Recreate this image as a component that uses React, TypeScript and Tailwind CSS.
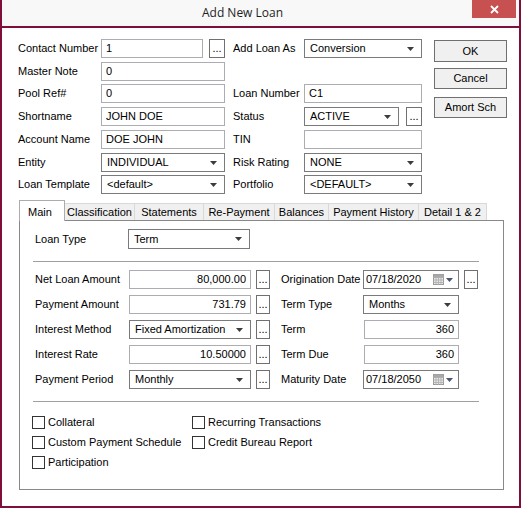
import React from 'react';

type BoxProps = { value?: string; className?: string; right?: boolean };

function Caret({ color = '#3c3c3c' }: { color?: string }) {
  return (
    <svg width="7" height="4" viewBox="0 0 7 4" className="shrink-0">
      <path d="M0 0h7L3.5 4z" fill={color} />
    </svg>
  );
}

function TextBox({ value = '', className = '', right }: BoxProps) {
  return (
    <div
      className={`h-[19px] border border-[#abadb3] bg-white flex items-center px-[4px] ${right ? 'justify-end' : ''} ${className}`}
    >
      <span className="leading-none">{value}</span>
    </div>
  );
}

function Select({ value = '', className = '' }: BoxProps) {
  return (
    <div className={`h-[19px] border border-[#7a7a7a] bg-white flex items-center pl-[5px] pr-[7px] ${className}`}>
      <span className="flex-1 leading-none">{value}</span>
      <Caret />
    </div>
  );
}

function Dots({ className = '' }: { className?: string }) {
  return (
    <div
      className={`h-[19px] border border-[#707070] bg-white flex items-end justify-center pb-[3px] text-[11px] leading-none ${className}`}
    >
      ...
    </div>
  );
}

function CalIcon() {
  return (
    <svg width="11" height="11" viewBox="0 0 11 11" className="shrink-0 mr-[2px]">
      <rect x="0.5" y="0.5" width="10" height="10" fill="#e8e8e8" stroke="#9a9a9a" />
      <path d="M0.5 3.5h10M0.5 6h10M0.5 8.5h10M3 3.5v7M5.5 3.5v7M8 3.5v7" stroke="#b4b4b4" strokeWidth="1" />
      <rect x="0.5" y="0.5" width="10" height="3" fill="#a8a8a8" />
    </svg>
  );
}

function DateBox({ value }: { value: string }) {
  return (
    <div className="h-[19px] w-[96px] border border-[#7a7a7a] bg-white flex items-center pl-[2px] pr-[5px]">
      <span className="flex-1 leading-none">{value}</span>
      <CalIcon />
      <Caret color="#4b5670" />
    </div>
  );
}

function Label({ children, className = '' }: { children?: React.ReactNode; className?: string }) {
  return <div className={`h-[19px] flex items-center leading-none ${className}`}>{children}</div>;
}

function Check({ label }: { label: string }) {
  return (
    <div className="h-[20px] flex items-center">
      <div className="w-[13px] h-[13px] border border-[#333333] bg-white shrink-0" />
      <span className="ml-[3px] leading-none">{label}</span>
    </div>
  );
}

const tabs = [
  { name: 'Classification', w: 'w-[70px]' },
  { name: 'Statements', w: 'w-[69px]' },
  { name: 'Re-Payment', w: 'w-[71px]' },
  { name: 'Balances', w: 'w-[54px]' },
  { name: 'Payment History', w: 'w-[90px]' },
  { name: 'Detail 1 & 2', w: 'w-[68px]' },
];

export default function App() {
  return (
    <div className="w-[521px] h-[508px] bg-white border-2 border-t-0 border-[#7d0f3a] text-[11px] text-black font-['Liberation_Sans',Arial,sans-serif] overflow-hidden">
      {/* Title bar */}
      <div className="relative h-[28px] bg-[#f8f8f8] border-b-2 border-[#7d0f3a] flex items-center justify-center pr-[36px]">
        <span className="text-[12px] text-[#1e1e1e] font-['Open_Sans','Noto_Sans',sans-serif] leading-none">Add New Loan</span>
        <div className="absolute right-[3px] top-0 w-[44px] h-[18px] bg-[#c75050] flex items-center justify-center">
          <svg width="9" height="9" viewBox="0 0 9 9">
            <path d="M1 1l7 7M8 1l-7 7" stroke="#ffffff" strokeWidth="1.8" />
          </svg>
        </div>
      </div>

      {/* Header fields */}
      <div className="flex pl-[16px] pt-[11px]">
        <div className="grid grid-cols-[83px_124px_8px_71px_118px] grid-rows-[23px_22px_23px_23px_23px_22px_19px]">
          <Label>Contact Number</Label>
          <div className="flex">
            <TextBox value="1" className="w-[102px]" />
            <Dots className="w-[16px] ml-[6px]" />
          </div>
          <div />
          <Label>Add Loan As</Label>
          <Select value="Conversion" />

          <Label>Master Note</Label>
          <TextBox value="0" />
          <div />
          <div />
          <div />

          <Label>Pool Ref#</Label>
          <TextBox value="0" />
          <div />
          <Label>Loan Number</Label>
          <TextBox value="C1" />

          <Label>Shortname</Label>
          <TextBox value="JOHN DOE" />
          <div />
          <Label>Status</Label>
          <div className="flex">
            <Select value="ACTIVE" className="w-[95px]" />
            <Dots className="w-[16px] ml-[7px]" />
          </div>

          <Label>Account Name</Label>
          <TextBox value="DOE JOHN" />
          <div />
          <Label>TIN</Label>
          <TextBox value="" />

          <Label>Entity</Label>
          <Select value="INDIVIDUAL" />
          <div />
          <Label>Risk Rating</Label>
          <Select value="NONE" />

          <Label>Loan Template</Label>
          <Select value="<default>" />
          <div />
          <Label>Portfolio</Label>
          <Select value="<DEFAULT>" />
        </div>

        <div className="ml-[12px] w-[73px] flex flex-col pt-[1px]">
          <div className="h-[22px] border border-[#707070] bg-[#f0f0f0] flex items-center justify-center">OK</div>
          <div className="h-[21px] mt-[6px] border border-[#707070] bg-[#f0f0f0] flex items-center justify-center">Cancel</div>
          <div className="h-[21px] mt-[8px] border border-[#707070] bg-[#f0f0f0] flex items-center justify-center">Amort Sch</div>
        </div>
      </div>

      {/* Tabs */}
      <div className="pl-[17px] mt-[6px]">
        <div className="flex items-start h-[20px]">
          <div className="relative z-10 w-[46px] h-[21px] bg-white border border-b-0 border-[#acacac] flex items-start pt-[3px] pl-[8px]">
            Main
          </div>
          {tabs.map((t) => (
            <div
              key={t.name}
              className={`${t.w} h-[17px] mt-[3px] bg-[#f0f0f0] border border-l-0 border-b-0 border-[#d9d9d9] flex items-center justify-center`}
            >
              {t.name}
            </div>
          ))}
        </div>

        {/* Panel */}
        <div className="w-[485px] h-[270px] border border-[#898989] bg-white">
          <div className="flex items-center pl-[15px] pt-[8px]">
            <div className="w-[93px]">Loan Type</div>
            <Select value="Term" className="w-[122px] h-[20px]" />
          </div>

          <div className="ml-[13px] w-[446px] mt-[12px] border-t border-[#a0a0a0]" />

          <div className="flex pl-[15px] mt-[8px]">
            <div className="flex flex-col gap-[6px]">
              <div className="flex">
                <Label className="w-[94px]">Net Loan Amount</Label>
                <TextBox value="80,000.00" right className="w-[122px]" />
                <Dots className="w-[14px] ml-[5px]" />
              </div>
              <div className="flex">
                <Label className="w-[94px]">Payment Amount</Label>
                <TextBox value="731.79" right className="w-[122px]" />
                <Dots className="w-[14px] ml-[5px]" />
              </div>
              <div className="flex">
                <Label className="w-[94px]">Interest Method</Label>
                <Select value="Fixed Amortization" className="w-[122px]" />
                <Dots className="w-[14px] ml-[5px]" />
              </div>
              <div className="flex">
                <Label className="w-[94px]">Interest Rate</Label>
                <TextBox value="10.50000" right className="w-[122px]" />
                <Dots className="w-[14px] ml-[5px]" />
              </div>
              <div className="flex">
                <Label className="w-[94px]">Payment Period</Label>
                <Select value="Monthly" className="w-[122px]" />
                <Dots className="w-[14px] ml-[5px]" />
              </div>
            </div>

            <div className="flex flex-col gap-[6px] ml-[11px]">
              <div className="flex">
                <Label className="w-[82px]">Origination Date</Label>
                <DateBox value="07/18/2020" />
                <Dots className="w-[14px] ml-[5px]" />
              </div>
              <div className="flex">
                <Label className="w-[82px]">Term Type</Label>
                <Select value="Months" className="w-[96px]" />
              </div>
              <div className="flex">
                <Label className="w-[83px]">Term</Label>
                <TextBox value="360" right className="w-[95px]" />
              </div>
              <div className="flex">
                <Label className="w-[83px]">Term Due</Label>
                <TextBox value="360" right className="w-[95px]" />
              </div>
              <div className="flex">
                <Label className="w-[82px]">Maturity Date</Label>
                <DateBox value="07/18/2050" />
              </div>
            </div>
          </div>

          <div className="ml-[13px] w-[446px] mt-[12px] border-t border-[#a0a0a0]" />

          <div className="flex pl-[12px] mt-[10px]">
            <div className="w-[160px] flex flex-col">
              <Check label="Collateral" />
              <Check label="Custom Payment Schedule" />
              <Check label="Participation" />
            </div>
            <div className="flex flex-col">
              <Check label="Recurring Transactions" />
              <Check label="Credit Bureau Report" />
            </div>
          </div>
        </div>
      </div>
    </div>
  );
}
